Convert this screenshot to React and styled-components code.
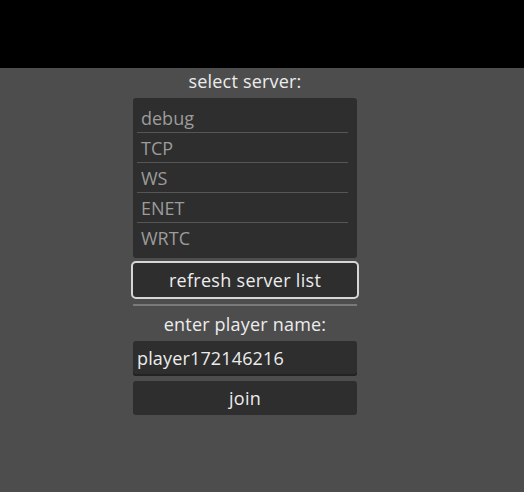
import styled, { createGlobalStyle } from "styled-components";

const GlobalStyle = createGlobalStyle`
    html, body {
        margin: 0;
        padding: 0;
        background-color: #4d4d4d;
    }
    body {
        font-family: "Open Sans", "Noto Sans", sans-serif;
    }
`;

const Screen = styled.div`
    width: 524px;
    height: 492px;
    display: flex;
    flex-direction: column;
    background-color: #4d4d4d;
    overflow: hidden;
`;
const TopBar = styled.div`
    height: 68px;
    flex-shrink: 0;
    background-color: #000;
`;
const Column = styled.div`
    width: 224px;
    margin-left: 133px;
    display: flex;
    flex-direction: column;
`;
const Label = styled.div`
    height: 26px;
    line-height: 26px;
    text-align: center;
    font-size: 18px;
    letter-spacing: 0.2px;
    color: #ececec;
    margin-top: ${(props) => props.$top || 0}px;
`;
const ServerList = styled.ul`
    list-style: none;
    margin: 4px 0 0;
    padding: 5px 0;
    height: 160px;
    box-sizing: border-box;
    background-color: #2e2e2e;
    border-radius: 3px;
`;
const ServerItem = styled.li`
    height: 30px;
    line-height: 30px;
    box-sizing: border-box;
    padding-left: 8px;
    font-size: 18px;
    color: #9c9c9c;
    position: relative;
    &:not(:last-child)::after {
        content: '';
        position: absolute;
        left: 4px;
        right: 9px;
        bottom: 0;
        height: 1px;
        background-color: #565656;
    }
`;
const Button = styled.button`
    height: ${(props) => props.$height || 34}px;
    margin-top: ${(props) => props.$top || 0}px;
    padding: 0;
    border: none;
    border-radius: 3px;
    background-color: #2e2e2e;
    color: #ececec;
    font-family: "Open Sans", "Noto Sans", sans-serif;
    font-size: 18px;
    letter-spacing: 0.3px;
    outline: ${(props) => props.$focused ? '2px solid #d6d6d6' : 'none'};
    outline-offset: 0;
`;
const Divider = styled.div`
    height: 2px;
    margin-top: 7px;
    background-color: #7a7a7a;
`;
const NameInput = styled.div`
    height: 35px;
    margin-top: 4px;
    box-sizing: border-box;
    padding-left: 4px;
    line-height: 34px;
    border-radius: 3px;
    background-color: #2e2e2e;
    box-shadow: inset 0 -2px 0 #232323;
    font-size: 18px;
    letter-spacing: 0.15px;
    color: #ececec;
`;

const servers = ['debug', 'TCP', 'WS', 'ENET', 'WRTC'];

export default function App() {
    return (
        <>
            <GlobalStyle />
            <Screen>
                <TopBar />
                <Column>
                    <Label>select server:</Label>
                    <ServerList>
                        {servers.map((s) => <ServerItem key={s}>{s}</ServerItem>)}
                    </ServerList>
                    <Button $top={5} $focused={true}>refresh server list</Button>
                    <Divider />
                    <Label $top={5}>enter player name:</Label>
                    <NameInput>player172146216</NameInput>
                    <Button $top={5}>join</Button>
                </Column>
            </Screen>
        </>
    );
}
